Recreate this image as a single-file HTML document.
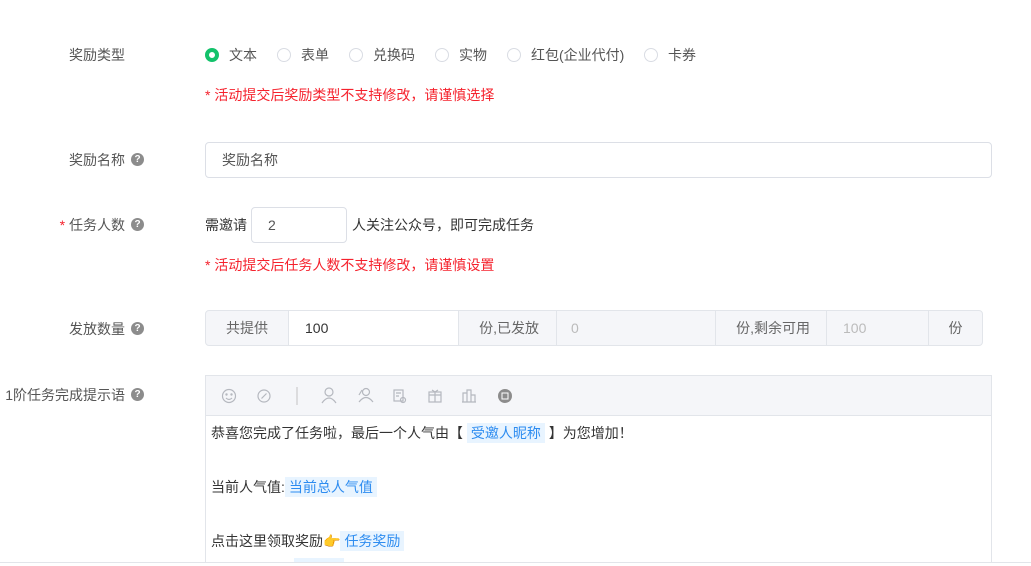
<!DOCTYPE html>
<html><head><meta charset="utf-8"><style>
*{box-sizing:border-box;margin:0;padding:0}
html,body{width:1031px;height:566px;overflow:hidden}
body{background:#fff;font-family:"Liberation Sans","Noto Sans CJK SC",sans-serif;font-size:14px;color:#333;position:relative}
.a{position:absolute;white-space:nowrap}
.lbl{position:absolute;right:906px;white-space:nowrap;color:#555;line-height:20px}
.q{display:inline-block;width:13px;height:13px;border-radius:50%;background:#8c8c8c;color:#fff;font-size:10px;line-height:13px;text-align:center;font-weight:bold}
.red{color:#f5222d}
.radio{position:absolute;top:48px;width:14px;height:14px;border:1px solid #d9dce3;border-radius:50%}
.rt{position:absolute;top:45px;line-height:20px;color:#555}
.cell{position:absolute;top:310px;height:36px;line-height:34px;border:1px solid #e2e5ea;color:#666}
.g{background:#f5f6f9}
.tag{background:#e8f4ff;color:#2d8cf0;padding:2px 4px}
</style></head><body>
<div class="lbl" style="top:45px">奖励类型</div>
<div class="radio" style="left:205px;border:4px solid #13c26b;background:#fff"></div>
<div class="rt" style="left:229px">文本</div>
<div class="radio" style="left:277px"></div><div class="rt" style="left:301px">表单</div>
<div class="radio" style="left:349px"></div><div class="rt" style="left:373px">兑换码</div>
<div class="radio" style="left:435px"></div><div class="rt" style="left:459px">实物</div>
<div class="radio" style="left:507px"></div><div class="rt" style="left:531px">红包(企业代付)</div>
<div class="radio" style="left:644px"></div><div class="rt" style="left:668px">卡券</div>
<div class="a red" style="left:205px;top:85px;line-height:20px">* 活动提交后奖励类型不支持修改，请谨慎选择</div>

<div class="lbl" style="top:150px">奖励名称</div><span class="q a" style="left:131px;top:153px">?</span>
<div class="a" style="left:205px;top:142px;width:787px;height:36px;border:1px solid #dcdfe6;border-radius:4px;padding-left:16px;line-height:34px;color:#555">奖励名称</div>

<div class="lbl" style="top:215px"><span class="red">* </span>任务人数</div><span class="q a" style="left:131px;top:218px">?</span>
<div class="a" style="left:205px;top:215px;line-height:20px">需邀请</div>
<div class="a" style="left:251px;top:207px;width:96px;height:36px;border:1px solid #dcdfe6;border-radius:4px;padding-left:16px;line-height:34px;color:#555">2</div>
<div class="a" style="left:352px;top:215px;line-height:20px">人关注公众号，即可完成任务</div>
<div class="a red" style="left:205px;top:255px;line-height:20px">* 活动提交后任务人数不支持修改，请谨慎设置</div>

<div class="lbl" style="top:319px">发放数量</div><span class="q a" style="left:131px;top:322px">?</span>
<div class="cell g" style="left:205px;width:84px;border-radius:4px 0 0 4px;text-align:center">共提供</div>
<div class="cell" style="left:288px;width:171px;padding-left:16px;color:#333">100</div>
<div class="cell g" style="left:458px;width:99px;text-align:right;padding-right:17px">份,已发放</div>
<div class="cell g" style="left:556px;width:160px;padding-left:14px;color:#bbb">0</div>
<div class="cell g" style="left:715px;width:112px;text-align:right;padding-right:16px">份,剩余可用</div>
<div class="cell g" style="left:826px;width:103px;padding-left:16px;color:#bbb">100</div>
<div class="cell g" style="left:928px;width:55px;border-radius:0 4px 4px 0;text-align:center">份</div>

<div class="lbl" style="top:385px">1阶任务完成提示语</div><span class="q a" style="left:131px;top:388px">?</span>
<div class="a" style="left:205px;top:375px;width:787px;height:200px;border:1px solid #e2e5ea"></div>
<div class="a" style="left:206px;top:376px;width:785px;height:40px;background:#f5f6f9;border-bottom:1px solid #e2e5ea"></div>
<svg class="a" style="left:205px;top:376px" width="320" height="40" fill="none" stroke="#b5b8bf" stroke-width="1.2">
<circle cx="24" cy="20" r="6.5"/><circle cx="21.5" cy="18.5" r=".6" fill="#b5b8bf"/><circle cx="26.5" cy="18.5" r=".6" fill="#b5b8bf"/><path d="M21 22q3 3 6 0"/>
<circle cx="59" cy="20" r="6"/><path d="M56.5 22.5l5-5"/>
<path d="M92 11v18" stroke="#ccc"/>
<circle cx="124" cy="16" r="4"/><path d="M117 27q7-10 14 0"/>
<circle cx="161" cy="16" r="3.5"/><path d="M154 26q7-9 14 0M157 14l-3 5"/>
<rect x="189" y="14" width="9" height="11"/><path d="M191 17h5M191 20h3"/><circle cx="198" cy="24" r="2.5"/>
<rect x="224" y="16" width="12" height="10"/><path d="M224 19h12M230 16v10M227 14l3 2 3-2"/>
<path d="M257 26h14M258 26v-9h4v9M262 26v-12h4v12M266 26v-7h4v7"/>
<circle cx="300" cy="20" r="7" fill="#8c8c8c" stroke="none"/><rect x="297" y="17" width="6" height="6" stroke="#fff" stroke-width="1"/>
</svg>
<div class="a" style="left:211px;top:423px;line-height:20px">恭喜您完成了任务啦，最后一个人气由【 <span class="tag">受邀人昵称</span> 】为您增加！</div>
<div class="a" style="left:211px;top:477px;line-height:20px">当前人气值:<span class="tag">当前总人气值</span></div>
<div class="a" style="left:211px;top:531px;line-height:20px">点击这里领取奖励<span style="color:#f0a020">👉</span><span class="tag">任务奖励</span></div>
<div class="a" style="left:294px;top:558px;width:50px;height:4px;background:#e8f4ff"></div>
<div class="a" style="left:0;top:562px;width:1031px;height:4px;background:#fff;border-top:1px solid #e2e5ea"></div>
</body></html>
